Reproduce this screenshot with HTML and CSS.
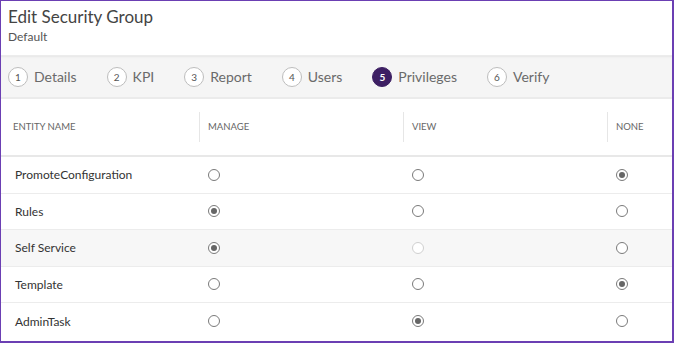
FILE: index.html
```html
<!DOCTYPE html>
<html>
<head>
<meta charset="utf-8">
<link rel="stylesheet" href="styles.css">
</head>
<body>
<div class="frame">
  <header class="head">
    <h1 class="title">Edit Security Group</h1>
    <div class="subtitle">Default</div>
  </header>
  <nav class="steps">
    <div class="step"><span class="num">1</span><span class="label">Details</span></div>
    <div class="step"><span class="num">2</span><span class="label">KPI</span></div>
    <div class="step"><span class="num">3</span><span class="label">Report</span></div>
    <div class="step"><span class="num">4</span><span class="label">Users</span></div>
    <div class="step active"><span class="num">5</span><span class="label">Privileges</span></div>
    <div class="step"><span class="num">6</span><span class="label">Verify</span></div>
  </nav>
  <div class="table">
    <div class="thead">
      <div class="th">ENTITY NAME</div>
      <div class="th">MANAGE</div>
      <div class="th">VIEW</div>
      <div class="th">NONE</div>
    </div>
    <div class="row">
      <div class="cell name">PromoteConfiguration</div>
      <div class="cell"><span class="radio"></span></div>
      <div class="cell"><span class="radio"></span></div>
      <div class="cell"><span class="radio checked"></span></div>
    </div>
    <div class="row">
      <div class="cell name">Rules</div>
      <div class="cell"><span class="radio checked"></span></div>
      <div class="cell"><span class="radio"></span></div>
      <div class="cell"><span class="radio"></span></div>
    </div>
    <div class="row shaded">
      <div class="cell name">Self Service</div>
      <div class="cell"><span class="radio checked"></span></div>
      <div class="cell"><span class="radio disabled"></span></div>
      <div class="cell"><span class="radio"></span></div>
    </div>
    <div class="row">
      <div class="cell name">Template</div>
      <div class="cell"><span class="radio"></span></div>
      <div class="cell"><span class="radio"></span></div>
      <div class="cell"><span class="radio checked"></span></div>
    </div>
    <div class="row">
      <div class="cell name">AdminTask</div>
      <div class="cell"><span class="radio"></span></div>
      <div class="cell"><span class="radio checked"></span></div>
      <div class="cell"><span class="radio"></span></div>
    </div>
  </div>
</div>
</body>
</html>
```

FILE: styles.css
```css
* { box-sizing: border-box; }
html, body { margin: 0; padding: 0; }
body {
  font-family: Lato, "Open Sans", sans-serif;
  background: #fff;
  color: #333;
}
.frame {
  width: 674px;
  height: 343px;
  border-style: solid;
  border-color: #6b3fb3;
  border-width: 1px 2px 2px 1px;
  overflow: hidden;
  display: flex;
  flex-direction: column;
}
.head {
  height: 54px;
  padding: 5px 7px 0;
  background: #fff;
}
.title {
  margin: 0;
  font-size: 17px;
  font-weight: 400;
  line-height: 22px;
  color: #444;
}
.subtitle {
  margin-top: 2px;
  font-size: 12px;
  line-height: 14px;
  color: #555;
}
.steps {
  height: 44px;
  background: #f5f5f5;
  border-top: 1px solid #ececec;
  border-bottom: 2px solid #ebebeb;
  box-shadow: inset 0 2px 2px -1px #e6e6e6;
  display: flex;
  align-items: center;
  padding-left: 7px;
  gap: 30px;
}
.step {
  display: flex;
  align-items: center;
  gap: 6px;
}
.num {
  width: 20px;
  height: 20px;
  border-radius: 50%;
  border: 1px solid #bdbdbd;
  background: #fff;
  font-size: 10px;
  color: #555;
  display: flex;
  align-items: center;
  justify-content: center;
}
.step.active .num {
  background: #3d1f63;
  border-color: #3d1f63;
  color: #fff;
  font-weight: 700;
}
.label {
  font-size: 14px;
  color: #6a6a6a;
}
.table {
  flex: 1;
}
.thead, .row {
  display: grid;
  grid-template-columns: 198px 204px 204px 1fr;
}
.thead {
  height: 58px;
  border-bottom: 2px solid #e8e8e8;
  align-items: center;
}
.th {
  font-size: 9.5px;
  color: #666;
  padding-left: 12px;
  line-height: 30px;
}
.th + .th {
  border-left: 1px solid #e6e6e6;
  padding-left: 8px;
}
.row {
  height: 36.5px;
  align-items: center;
  border-bottom: 1px solid #ececec;
}
.row:last-child { border-bottom: none; }
.row.shaded { background: #f7f7f7; }
.cell {
  display: flex;
  align-items: center;
  padding-left: 9px;
  font-size: 12px;
  color: #333;
}
.cell.name { padding-left: 14px; }
.radio {
  width: 12px;
  height: 12px;
  border-radius: 50%;
  border: 1px solid #7a7a7a;
  background: #fff;
  display: inline-block;
  position: relative;
}
.radio.checked::after {
  content: "";
  position: absolute;
  left: 2px; top: 2px;
  width: 6px; height: 6px;
  border-radius: 50%;
  background: #666;
}
.radio.disabled { border-color: #d0d0d0; }
```
